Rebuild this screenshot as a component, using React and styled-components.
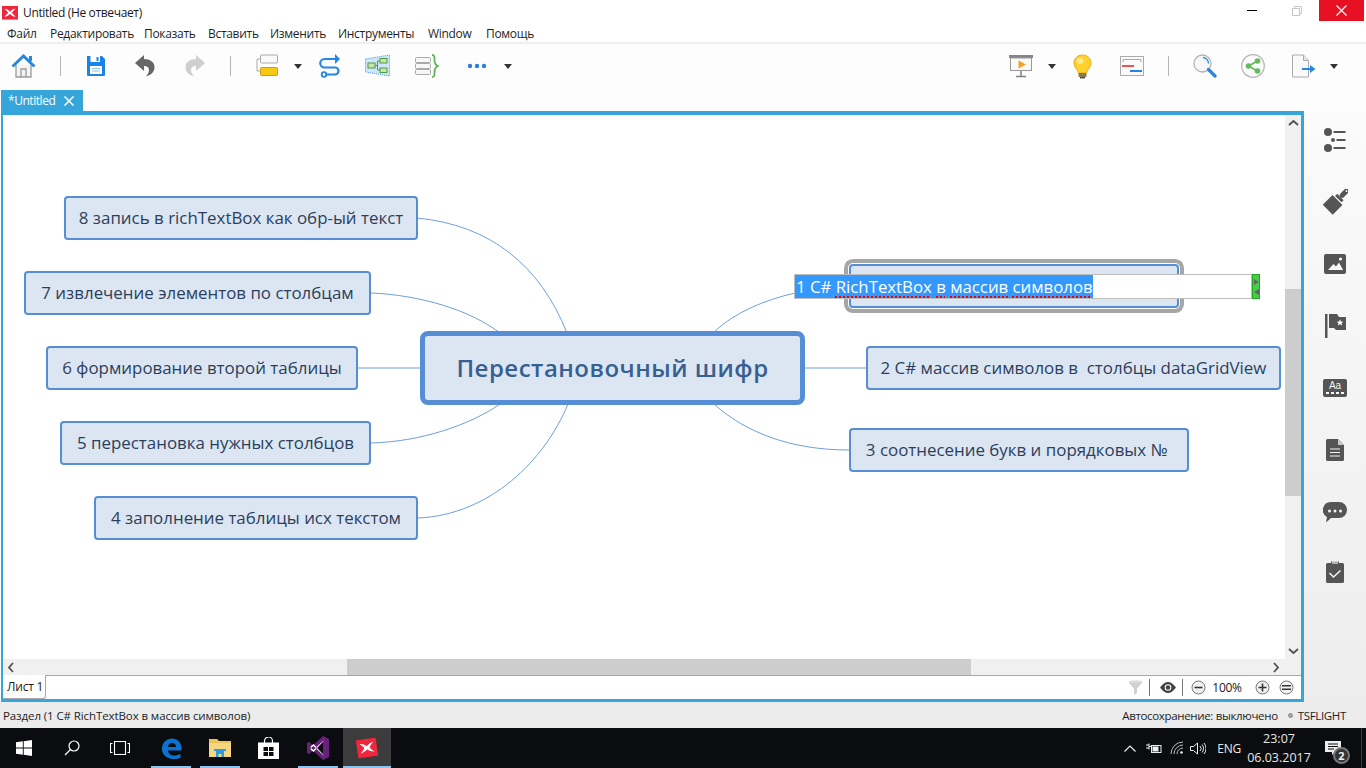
import React from "react";
import styled, { createGlobalStyle } from "styled-components";

const UI_FONT = `"Open Sans", "Noto Sans", "Liberation Sans", sans-serif`;

const Global = createGlobalStyle`
  html, body { margin: 0; padding: 0; background: #fff; overflow: hidden; }
  * { box-sizing: border-box; }
`;

const Page = styled.div`
  width: 1366px;
  height: 768px;
  display: flex;
  flex-direction: column;
  overflow: hidden;
  font-family: ${UI_FONT};
  font-size: 12px;
  color: #222;
  background: #fdfdfd;
`;

const TitleBar = styled.div`
  height: 25px;
  display: flex;
  align-items: flex-start;
  background: #fff;
`;
const TitleLogo = styled.div`
  margin: 6px 0 0 2px;
  width: 16px;
  height: 14px;
  display: flex;
`;
const TitleText = styled.div`
  margin: 4px 0 0 5px;
  line-height: 17px;
  letter-spacing: -0.35px;
  color: #1a1a1a;
`;
const WinControls = styled.div`
  margin-left: auto;
  margin-right: 2px;
  display: flex;
`;
const WinButton = styled.div`
  width: ${(p) => p.$w}px;
  height: 21px;
  display: flex;
  align-items: center;
  justify-content: center;
  background: ${(p) => (p.$close ? "#e81123" : "transparent")};
`;

const MenuBar = styled.div`
  height: 17px;
  display: flex;
  padding: 1px 0 0 7px;
  background: #fff;
`;
const MenuItem = styled.div`
  width: ${(p) => p.$w}px;
  line-height: 16px;
  letter-spacing: -0.3px;
  white-space: nowrap;
  color: #1f1f1f;
`;

const Toolbar = styled.div`
  height: 48px;
  display: flex;
  align-items: center;
  padding: 0 28px 2px 0;
  border-top: 2px solid #efefef;
  background: #fdfdfd;
`;
const ToolGroup = styled.div`
  display: flex;
  align-items: center;
  margin-left: ${(p) => (p.$right ? "auto" : "0")};
`;
const Tool = styled.div`
  width: ${(p) => p.$w}px;
  height: 26px;
  margin-left: ${(p) => p.$ml}px;
  display: flex;
  align-items: center;
  justify-content: center;
`;
const ToolSep = styled.div`
  width: 1px;
  height: 20px;
  margin-left: ${(p) => p.$ml}px;
  background: #b5b5b5;
`;
const Caret = styled.div`
  width: 0;
  height: 0;
  margin-left: ${(p) => p.$ml}px;
  border-left: 4.5px solid transparent;
  border-right: 4.5px solid transparent;
  border-top: 5px solid #333;
`;

const TabRow = styled.div`
  height: 21px;
  display: flex;
  padding-left: 1px;
  background: #fdfdfd;
`;
const Tab = styled.div`
  width: 82px;
  height: 21px;
  display: flex;
  align-items: center;
  justify-content: space-between;
  padding: 0 9px 0 7px;
  background: #36a5d9;
  color: #fff;
  letter-spacing: -0.45px;
`;

const Workspace = styled.div`
  height: 591px;
  display: flex;
`;
const Frame = styled.div`
  width: 1303px;
  margin-left: 1px;
  display: flex;
  flex-direction: column;
  border: 3px solid #36a5d9;
  border-top-width: 4px;
  border-left-width: 2px;
  background: #fff;
`;
const CanvasRow = styled.div`
  height: 544px;
  display: flex;
`;
const Canvas = styled.div`
  position: relative;
  width: 1282px;
  height: 544px;
  overflow: hidden;
  background: #fff;
`;
const Lines = styled.svg`
  position: absolute;
  left: 0;
  top: 0;
`;
const Node = styled.div`
  position: absolute;
  left: ${(p) => p.$x - 3}px;
  top: ${(p) => p.$y - 115}px;
  width: ${(p) => p.$w}px;
  height: ${(p) => p.$h}px;
  display: flex;
  align-items: center;
  justify-content: center;
  padding-bottom: 2px;
  white-space: pre;
  background: #dce6f2;
  border: 2px solid #558ed5;
  border-radius: 4px;
  font-size: 16.9px;
  color: #2b3f5c;
  box-shadow: ${(p) => (p.$selected ? "0 0 0 1px #fff, 0 0 0 5px #a6a6a6" : "none")};
`;
const CentralNode = styled(Node)`
  border-width: 5px;
  border-radius: 8px;
  font-size: 24px;
  font-weight: 600;
  letter-spacing: 0.5px;
  color: #376092;
`;
const Editor = styled.div`
  position: absolute;
  left: ${794 - 3}px;
  top: ${274 - 115}px;
  width: 458px;
  height: 25px;
  border: 1px solid #bdbdbd;
  background: #fff;
  font-size: 16.8px;
  line-height: 23px;
  white-space: nowrap;
`;
const Selection = styled.span`
  display: inline-block;
  height: 23px;
  padding: 0 0 0 1px;
  background: #3399ff;
  color: #fff;
`;
const Misspelled = styled.span`
  text-decoration: underline dotted #f00000 2px;
  text-underline-offset: 3px;
`;
const Handle = styled.div`
  position: absolute;
  left: ${1252 - 3}px;
  top: ${274 - 115}px;
  width: 8px;
  height: 25px;
  display: flex;
  flex-direction: column;
  align-items: center;
  justify-content: center;
  gap: 4px;
  background: #44d044;
  border: 1px solid #1fa51f;
`;

const VScroll = styled.div`
  width: 16px;
  height: 544px;
  display: flex;
  flex-direction: column;
  background: #f0f0f0;
`;
const ScrollBtn = styled.div`
  flex: none;
  width: 16px;
  height: 16px;
  margin-left: ${(p) => p.$ml || 0}px;
  display: flex;
  align-items: center;
  justify-content: center;
`;
const VThumbSpace = styled.div`
  flex: none;
  height: ${(p) => p.$h}px;
`;
const VThumb = styled.div`
  flex: none;
  height: 207px;
  background: #cdcdcd;
`;
const HScroll = styled.div`
  height: 16px;
  display: flex;
  background: #f0f0f0;
`;
const HThumb = styled.div`
  width: 624px;
  margin-left: 328px;
  background: #cdcdcd;
`;
const SheetBar = styled.div`
  flex: 1;
  display: flex;
  align-items: stretch;
  background: #fff;
`;
const SheetTab = styled.div`
  width: 43px;
  padding-left: 4px;
  line-height: 23px;
  letter-spacing: -0.2px;
  color: #1a1a1a;
  border-right: 1px solid #a8a8a8;
  border-bottom: 1px solid #a8a8a8;
  border-bottom-right-radius: 3px;
`;
const SheetRest = styled.div`
  flex: 1;
  display: flex;
  align-items: center;
  justify-content: flex-end;
  padding-right: 7px;
  border-top: 1px solid #a8a8a8;
`;
const SheetTool = styled.div`
  width: ${(p) => p.$w}px;
  margin-left: ${(p) => p.$ml}px;
  display: flex;
  align-items: center;
  justify-content: center;
  font-size: 12px;
  letter-spacing: -0.3px;
  color: #222;
`;
const SheetSep = styled.div`
  width: 1px;
  height: 17px;
  margin-left: ${(p) => p.$ml}px;
  background: #777;
`;

const Sidebar = styled.div`
  flex: 1;
  display: flex;
  flex-direction: column;
  align-items: center;
  gap: 38px;
  padding-top: 17px;
  background: linear-gradient(#fbfbfb, #ededed);
`;
const SideIcon = styled.div`
  width: 26px;
  height: 24px;
  margin-top: ${(p) => p.$mt || 0}px;
  display: flex;
  align-items: center;
  justify-content: center;
`;

const StatusBar = styled.div`
  height: 26px;
  display: flex;
  align-items: center;
  padding: 0 20px 0 3px;
  background: #ececec;
  font-size: 11.5px;
  letter-spacing: -0.1px;
  color: #1e1e1e;
`;
const StatusRight = styled.div`
  margin-left: auto;
  display: flex;
  align-items: center;
  letter-spacing: -0.34px;
`;
const StatusDot = styled.span`
  width: 5px;
  height: 5px;
  margin: 0 5px 0 10px;
  border-radius: 50%;
  background: #aaa;
  border: 1px solid #8a8a8a;
`;

const Taskbar = styled.div`
  height: 40px;
  display: flex;
  background: #0a0c0f;
  color: #e8e8e8;
`;
const TaskItem = styled.div`
  position: relative;
  width: 48px;
  height: 40px;
  margin-left: ${(p) => p.$ml || 0}px;
  flex: none;
  display: flex;
  align-items: center;
  justify-content: center;
  background: ${(p) => (p.$active ? "#3c3c3c" : "transparent")};
  &::after {
    content: "";
    display: ${(p) => (p.$open ? "block" : "none")};
    position: absolute;
    left: ${(p) => (p.$active ? 0 : 4)}px;
    right: ${(p) => (p.$active ? 0 : 4)}px;
    bottom: 0;
    height: 2px;
    background: #8cc4f0;
  }
`;
const Tray = styled.div`
  margin-left: auto;
  display: flex;
  align-items: center;
  height: 40px;
`;
const TrayIcon = styled.div`
  margin-left: ${(p) => p.$ml}px;
  display: flex;
`;
const TrayText = styled.div`
  margin-left: 11px;
  font-size: 12px;
  letter-spacing: -0.2px;
`;
const Clock = styled.div`
  width: 64px;
  margin-left: 6px;
  text-align: center;
  font-size: 12.5px;
  line-height: 19px;
`;
const Notify = styled.div`
  position: relative;
  width: 53px;
  height: 40px;
  margin-left: -2px;
  margin-right: 4px;
  padding-right: 5px;
  display: flex;
  align-items: center;
  justify-content: center;
  border-right: 1px solid #3a3a3a;
`;
const Badge = styled.div`
  position: absolute;
  left: 24px;
  top: 19px;
  width: 17px;
  height: 17px;
  border-radius: 50%;
  background: #333;
  border: 2px solid #777;
  color: #eee;
  font-size: 11px;
  font-weight: 700;
  line-height: 13px;
  text-align: center;
`;

const XmindMark = ({ size = 16 }) => (
  <svg width={size} height={size * 0.85} viewBox="0 0 20 17">
    <rect width="20" height="17" fill="#f0263c" />
    <path d="M3 3.500c3 .2 5 1.500 7 3.600 2-2.100 4-3.400 7-3.600-2 1.600-3.600 3.200-4.700 5 1.100 1.600 2.700 3 4.700 4.900-3-.3-5-1.500-7-3.500-2 2-4 3.200-7 3.500 2-1.900 3.600-3.300 4.700-4.900C6.600 6.700 5 5.100 3 3.500z" fill="#fff" />
  </svg>
);

const HomeIcon = () => (
  <svg width="25" height="24" viewBox="0 0 25 24">
    <path d="M5 11v12h15V11" fill="#f4f4f4" stroke="#9a9a9a" strokeWidth="1.300" />
    <path d="M10 23v-8h5v8" fill="none" stroke="#9a9a9a" strokeWidth="1.300" />
    <path d="M1.500 12.500 12.500 2l11 10.500" fill="none" stroke="#2a86e0" strokeWidth="3" />
    <rect x="18" y="2" width="3" height="5" fill="#2a86e0" />
  </svg>
);
const SaveIcon = () => (
  <svg width="20" height="22" viewBox="0 0 20 22">
    <path d="M1 1h15l3 3v16a1 1 0 0 1-1 1H2a1 1 0 0 1-1-1z" fill="#1a83e6" />
    <rect x="4.500" y="1" width="9.500" height="6" fill="#fff" />
    <rect x="10.500" y="2" width="2" height="4" fill="#1a83e6" />
    <rect x="4" y="11" width="12" height="8" fill="#fff" />
    <path d="M6 13.500h8M6 16h8" stroke="#8dbdf0" strokeWidth="1" />
  </svg>
);
const UndoIcon = ({ color, flip }) => (
  <svg width="20" height="22" viewBox="0 0 20 22" style={flip ? { transform: "scaleX(-1)" } : undefined}>
    <path d="M9 0 0 8l9 8v-5c3 0 5 1.500 5 4 0 2-1 4-3 6.500 5.500-1.500 8.500-5 8.500-9.500 0-5-4.500-8-10.500-8z" fill={color} />
  </svg>
);
const TopicIcon = () => (
  <svg width="22" height="24" viewBox="0 0 22 24">
    <rect x="4.500" y="1" width="17" height="8" rx="1" fill="#fafafa" stroke="#aaa" />
    <rect x="4.500" y="13.500" width="17" height="8" rx="1" fill="#f7c815" stroke="#dd9a00" />
    <path d="M4.500 5H1v12h3.500" fill="none" stroke="#aaa" />
  </svg>
);
const RelationIcon = () => (
  <svg width="23" height="24" viewBox="0 0 23 24">
    <path d="M18 5H6.500a4 4 0 0 0 0 8.500H17a3.500 3.500 0 0 1 0 7H8" fill="none" stroke="#2486e4" strokeWidth="2.200" />
    <path d="M17 0v10l5-5z" fill="#2486e4" />
    <circle cx="6" cy="20.500" r="2.300" fill="#fff" stroke="#2486e4" strokeWidth="1.800" />
  </svg>
);
const BoundaryIcon = () => (
  <svg width="25" height="24" viewBox="0 0 25 24">
    <path d="M0.500 5 24.500 1v21L0.500 18z" fill="#cfe5fa" stroke="#4c9ae0" strokeDasharray="1 1" />
    <g fill="#c9e6a5" stroke="#4f9a48">
      <rect x="3" y="9" width="7" height="5" />
      <rect x="15" y="4.500" width="7" height="4.500" />
      <rect x="15" y="14" width="7" height="4.500" />
    </g>
    <path d="M10 11.500h2.500M12.500 7v9M12.500 7H15M12.500 16H15" stroke="#4f9a48" fill="none" />
  </svg>
);
const SummaryIcon = () => (
  <svg width="24" height="24" viewBox="0 0 24 24">
    <g fill="#f7f7f7" stroke="#a9a9a9">
      <rect x="0.500" y="3.500" width="15" height="5" rx="1" />
      <rect x="0.500" y="9.500" width="15" height="5" rx="1" />
      <rect x="0.500" y="15.500" width="15" height="5" rx="1" />
    </g>
    <path d="M17 1c3 0 2.500 2.500 2.500 5 0 3 .5 5 3.500 6-3 1-3.500 3-3.500 6 0 2.500.5 5-2.500 5" fill="none" stroke="#5cb356" strokeWidth="1.800" />
  </svg>
);
const DotsIcon = () => (
  <svg width="20" height="6" viewBox="0 0 20 6">
    <circle cx="3" cy="3" r="2.200" fill="#2a7fd8" />
    <circle cx="10" cy="3" r="2.200" fill="#2a7fd8" />
    <circle cx="17" cy="3" r="2.200" fill="#2a7fd8" />
  </svg>
);
const PresentIcon = () => (
  <svg width="24" height="24" viewBox="0 0 24 24">
    <rect x="0" y="1" width="24" height="3" fill="#858585" />
    <rect x="1.500" y="4" width="21" height="12.500" fill="#fafafa" stroke="#9a9a9a" />
    <path d="M9.500 6.500v8l7.500-4z" fill="#f5a020" />
    <path d="M12 17v5M7 22.500h10" stroke="#808080" strokeWidth="1.500" />
  </svg>
);
const BulbIcon = () => (
  <svg width="19" height="25" viewBox="0 0 19 25">
    <path d="M9.500 1C4.500 1 1 4.500 1 9c0 4 3.500 6 4.500 10h8C14.500 15 18 13 18 9c0-4.500-3.500-8-8.500-8z" fill="#ffd12e" stroke="#e9ab14" />
    <ellipse cx="7" cy="7" rx="3.500" ry="3" fill="#ffe98a" />
    <rect x="5.500" y="19" width="8" height="4" fill="#8a7a50" />
    <rect x="7" y="23" width="5" height="1.500" fill="#555" />
  </svg>
);
const GanttIcon = () => (
  <svg width="24" height="20" viewBox="0 0 24 20">
    <rect x="0.500" y="0.500" width="23" height="19" fill="#fafafa" stroke="#aaa" />
    <path d="M3 6V3.500h18V6" fill="none" stroke="#aaa" />
    <rect x="2" y="9" width="12" height="2" fill="#ef5350" />
    <rect x="10" y="14" width="12" height="2" fill="#2486e4" />
  </svg>
);
const SearchIcon = () => (
  <svg width="24" height="24" viewBox="0 0 24 24">
    <circle cx="9.500" cy="9.500" r="8.500" fill="#f7f7f7" stroke="#b5b5b5" strokeWidth="1.300" />
    <path d="M10 3.500a6 6 0 0 1 5.500 6" fill="none" stroke="#2a86e0" strokeWidth="1.300" />
    <path d="M15.500 15.500 22 22" stroke="#2a86e0" strokeWidth="3.200" strokeLinecap="round" />
  </svg>
);
const ShareIcon = () => (
  <svg width="24" height="24" viewBox="0 0 24 24">
    <circle cx="12" cy="12" r="11.300" fill="#fafafa" stroke="#b5b5b5" strokeWidth="1.200" />
    <path d="M16.500 7 7.500 12l9 5" fill="none" stroke="#64ba5e" strokeWidth="1.600" />
    <circle cx="16.500" cy="7" r="2.800" fill="#64ba5e" />
    <circle cx="7.500" cy="12" r="2.800" fill="#64ba5e" />
    <circle cx="16.500" cy="17" r="2.800" fill="#64ba5e" />
  </svg>
);
const ExportIcon = () => (
  <svg width="24" height="24" viewBox="0 0 24 24">
    <path d="M0.500 1h11l5 5.500v16.500H0.500z" fill="#fafafa" stroke="#aaa" />
    <path d="M11.500 1v5.500h5" fill="#e6e6e6" stroke="#aaa" />
    <path d="M10 15h9" stroke="#2486e4" strokeWidth="2" />
    <path d="M18 11l5.500 4-5.500 4z" fill="#2486e4" />
  </svg>
);

const ListSide = () => (
  <svg width="22" height="24" viewBox="0 0 22 24" fill="#555">
    <circle cx="4" cy="4" r="4" />
    <circle cx="4" cy="20" r="4" />
    <circle cx="9" cy="12" r="2" />
    <rect x="9.500" y="3" width="12" height="2" />
    <rect x="12.500" y="11" width="9" height="2" />
    <rect x="9.500" y="19" width="12" height="2" />
  </svg>
);
const BrushSide = () => (
  <svg width="25" height="26" viewBox="0 0 25 26" fill="#555">
    <g transform="rotate(45 12.500 13)">
      <rect x="10" y="-5" width="5" height="11" rx="2.500" />
      <circle cx="12.500" cy="-2.500" r="0.900" fill="#fafafa" />
      <path d="M8 6h9v3H8z" />
      <path d="M5.500 10.200h14V24H5.500z" />
    </g>
  </svg>
);
const ImageSide = () => (
  <svg width="22" height="20" viewBox="0 0 22 20">
    <rect width="22" height="20" rx="2" fill="#555" />
    <path d="M4 16l5.500-6 2.500 2.500 3-4 4 7.500z" fill="#fafafa" />
    <circle cx="16.500" cy="5" r="1.600" fill="#fafafa" />
  </svg>
);
const FlagSide = () => (
  <svg width="21" height="24" viewBox="0 0 21 24" fill="#555">
    <rect x="0" y="0" width="2.500" height="24" />
    <path d="M4 0h8l2 3h7v13H11l-2-2H4z" />
    <path d="M15 5.500l1 2 2.200.2-1.600 1.500.5 2.300-2.100-1.200-2.100 1.200.5-2.300-1.600-1.500 2.200-.2z" fill="#fafafa" />
  </svg>
);
const TextSide = styled.div`
  width: 24px;
  height: 18px;
  display: flex;
  flex-direction: column;
  align-items: center;
  border-radius: 2px;
  background: #555;
  color: #f5f5f5;
  font-family: "Liberation Sans", sans-serif;
  font-size: 10px;
  line-height: 11px;
  padding-top: 1px;
  &::after {
    content: "";
    width: 18px;
    height: 1.500px;
    margin-top: 1px;
    background: repeating-linear-gradient(90deg, #f5f5f5 0 3px, transparent 3px 5px);
  }
`;
const DocSide = () => (
  <svg width="18" height="22" viewBox="0 0 18 22">
    <path d="M1.500 0H12l6 6v14.500a1.500 1.500 0 0 1-1.500 1.500h-15A1.500 1.500 0 0 1 0 20.500v-19A1.500 1.500 0 0 1 1.500 0z" fill="#555" />
    <path d="M12 0l6 6h-6z" fill="#c9c9c9" />
    <path d="M4 10h10M4 13.500h10M4 17h10" stroke="#f5f5f5" strokeWidth="1.200" />
  </svg>
);
const CommentSide = () => (
  <svg width="24" height="21" viewBox="0 0 24 21">
    <path d="M8 0h8a8 8 0 0 1 0 16H8l-5 4.500 1-5.500A8 8 0 0 1 8 0z" fill="#555" />
    <circle cx="6.500" cy="9" r="1.500" fill="#f5f5f5" />
    <circle cx="12" cy="9" r="1.500" fill="#f5f5f5" />
    <circle cx="17.500" cy="9" r="1.500" fill="#f5f5f5" />
  </svg>
);
const ClipSide = () => (
  <svg width="18" height="23" viewBox="0 0 18 23">
    <path d="M1.500 3H5V1.500h8V3h3.500A1.500 1.500 0 0 1 18 4.500v17a1.500 1.500 0 0 1-1.500 1.500h-15A1.500 1.500 0 0 1 0 21.500v-17A1.500 1.500 0 0 1 1.500 3z" fill="#555" />
    <path d="M6 1h6v3H6z" fill="#f0f0f0" opacity=".6" />
    <path d="M3.500 13l4 4 7-6.500" fill="none" stroke="#f5f5f5" strokeWidth="1.500" />
  </svg>
);

const Chevron = ({ dir }) => {
  const d = {
    up: "M1 7 5.500 3 10 7",
    down: "M1 3 5.500 7 10 3",
    left: "M7 1 3 5.500 7 10",
    right: "M3 1 7 5.500 3 10",
  }[dir];
  return (
    <svg width="11" height="11" viewBox="0 0 11 11">
      <path d={d} fill="none" stroke="#505050" strokeWidth="1.800" />
    </svg>
  );
};

const FilterIcon = () => (
  <svg width="15" height="15" viewBox="0 0 15 15">
    <ellipse cx="7.500" cy="2" rx="7" ry="1.800" fill="#dcdcdc" />
    <path d="M1 3 6 8.500V15l3-2V8.500L14 3z" fill="#d0d0d0" />
  </svg>
);
const EyeIcon = () => (
  <svg width="16" height="11" viewBox="0 0 16 11">
    <path d="M0 5.500C3 1.500 5.500 0 8 0s5 1.500 8 5.500C13 9.500 10.500 11 8 11S3 9.500 0 5.500z" fill="#444" />
    <circle cx="8" cy="5.500" r="3.300" fill="#fff" />
    <circle cx="8" cy="5.500" r="2.200" fill="#444" />
  </svg>
);
const ZoomBtn = ({ type }) => (
  <svg width="15" height="15" viewBox="0 0 15 15">
    <circle cx="7.500" cy="7.500" r="6.500" fill="#f2f2f2" stroke="#777" />
    {type === "fit" ? (
      <path d="M3 5.800h9M3 9.200h9" stroke="#333" strokeWidth="1.600" />
    ) : (
      <path d={type === "plus" ? "M3.500 7.500h8M7.500 3.500v8" : "M3.500 7.500h8"} stroke="#333" strokeWidth="1.600" />
    )}
  </svg>
);

const WinLogo = () => (
  <svg width="16" height="16" viewBox="0 0 16 16" fill="#fff">
    <path d="M0 2.300 6.800 1.300v6.300H0zM7.700 1.200 16 0v7.600H7.700zM0 8.400h6.800v6.300L0 13.700zM7.700 8.400H16V16l-8.300-1.200z" />
  </svg>
);
const SearchTask = () => (
  <svg width="16" height="16" viewBox="0 0 16 16" fill="none" stroke="#fff" strokeWidth="1.200">
    <circle cx="10" cy="6" r="5" />
    <path d="M6.500 9.500 1 15" />
  </svg>
);
const TaskView = () => (
  <svg width="20" height="14" viewBox="0 0 20 14" fill="none" stroke="#fff" strokeWidth="1.100">
    <rect x="4.500" y="0.500" width="11" height="13" />
    <path d="M2.500 2.500H.5v9h2M17.500 2.500h2v9h-2" />
  </svg>
);
const EdgeIcon = () => (
  <svg width="21" height="21" viewBox="0 0 21 21">
    <path d="M1 11C1 4 6 .5 11 .5c5.500 0 9.500 4 9.500 10v2H7c.3 3.500 3 5 6 5 2.500 0 5-.8 6.500-1.800v4c-2 1-4.500 1.500-7 1.500C6 20.700 1 17 1 11zm6-2h8c0-2.500-1.500-4-3.800-4C8.800 5 7.300 6.500 7 9z" fill="#0b72cf" />
  </svg>
);
const FolderIcon = () => (
  <svg width="22" height="20" viewBox="0 0 22 20">
    <path d="M0 1h8l2 2h12v16H0z" fill="#eec25a" />
    <path d="M0 5h22v14H0z" fill="#f6d77f" />
    <path d="M7 19v-6h8v6h-2.500v-3h-3v3z" fill="#2f9bdc" />
    <rect x="5" y="11" width="12" height="2" fill="#2f9bdc" />
  </svg>
);
const StoreIcon = () => (
  <svg width="21" height="22" viewBox="0 0 21 22">
    <path d="M6.500 6V4a4 4 0 0 1 8 0v2" fill="none" stroke="#fff" strokeWidth="1.200" />
    <path d="M0 5.500h21V22H0z" fill="#fff" />
    <path d="M5.500 10h4.500v4H5.500zM11 10h4.500v4H11zM5.500 15h4.500v4H5.500zM11 15h4.500v4H11z" fill="#0a0c0f" />
  </svg>
);
const VsIcon = () => (
  <svg width="22" height="24" viewBox="0 0 22 24">
    <path d="M16 0l6 3v18l-6 3L6 14.500 2 18l-2-1V7l2-1 4 3.500z" fill="#68217a" />
    <path d="M16 6.500 10 12l6 5.500zM3 9v6l3-3z" fill="#0a0c0f" />
    <path d="M16.500 4.500 6.500 14 3 11v2l3.500 3 10-11zM16.500 19.500 6.500 10 3 13v-2l3.500-3 10 11z" fill="#fff" />
  </svg>
);
const TaskXmind = () => (
  <svg width="22" height="20" viewBox="0 0 22 20" style={{ transform: "rotate(-8deg)" }}>
    <rect x="1" y="1" width="20" height="18" rx="1" fill="#f0263c" />
    <path d="M4 5c3 .2 5 1.300 7 3.200C13 6.300 15 5.200 18 5c-2 1.500-3.300 3-4.300 4.800 1 1.500 2.300 3 4.300 4.700-3-.3-5-1.300-7-3.200-2 1.900-4 2.900-7 3.200 2-1.700 3.300-3.200 4.300-4.700C7.300 8 6 6.500 4 5z" fill="#fff" />
  </svg>
);

const menu = [
  ["Файл", 43],
  ["Редактировать", 94],
  ["Показать", 64],
  ["Вставить", 62],
  ["Изменить", 68],
  ["Инструменты", 90],
  ["Window", 58],
  ["Помощь", 60],
];

const branches = [
  ["8 запись в richTextBox как обр-ый текст", 64, 196, 354, 44],
  ["7 извлечение элементов по столбцам", 24, 271, 347, 44],
  ["6 формирование второй таблицы", 46, 346, 312, 44],
  ["5 перестановка нужных столбцов", 60, 421, 311, 44],
  ["4 заполнение таблицы исх текстом", 94, 496, 324, 44],
  ["2 C# массив символов в  столбцы dataGridView", 866, 346, 415, 44],
  ["3 соотнесение букв и порядковых № ", 849, 428, 340, 44],
];

const connectors = [
  "M417 218C490 225 540 265 567 333",
  "M371 293C420 295 470 310 500 333",
  "M357 368H420",
  "M370 443C420 442 470 425 500 404",
  "M418 518C490 515 545 460 568 404",
  "M714 332C735 312 765 300 795 293",
  "M805 368H866",
  "M714 404C745 432 790 450 849 450",
];

export default function App() {
  return (
    <Page>
      <Global />
      <TitleBar>
        <TitleLogo>
          <XmindMark />
        </TitleLogo>
        <TitleText>Untitled (Не отвечает)</TitleText>
        <WinControls>
          <WinButton $w={45}>
            <svg width="10" height="1"><rect width="10" height="1" fill="#000" /></svg>
          </WinButton>
          <WinButton $w={45}>
            <svg width="10" height="10" viewBox="0 0 10 10" fill="none" stroke="#c8c8c8">
              <rect x=".5" y="2.500" width="7" height="7" />
              <path d="M2.500 2.500v-2h7v7h-2" />
            </svg>
          </WinButton>
          <WinButton $w={45} $close>
            <svg width="11" height="11" viewBox="0 0 11 11" stroke="#fff" strokeWidth="1.200">
              <path d="M.5.500l10 10M10.500.500l-10 10" />
            </svg>
          </WinButton>
        </WinControls>
      </TitleBar>

      <MenuBar>
        {menu.map(([label, w]) => (
          <MenuItem key={label} $w={w}>{label}</MenuItem>
        ))}
      </MenuBar>

      <Toolbar>
        <ToolGroup>
          <Tool $w={25} $ml={11}><HomeIcon /></Tool>
          <ToolSep $ml={24} />
          <Tool $w={20} $ml={25}><SaveIcon /></Tool>
          <Tool $w={20} $ml={29}><UndoIcon color="#666" /></Tool>
          <Tool $w={20} $ml={30}><UndoIcon color="#cfcfcf" flip /></Tool>
          <ToolSep $ml={25} />
          <Tool $w={22} $ml={25}><TopicIcon /></Tool>
          <Caret $ml={16} />
          <Tool $w={23} $ml={16}><RelationIcon /></Tool>
          <Tool $w={25} $ml={24}><BoundaryIcon /></Tool>
          <Tool $w={24} $ml={25}><SummaryIcon /></Tool>
          <Tool $w={20} $ml={28}><DotsIcon /></Tool>
          <Caret $ml={17} />
        </ToolGroup>
        <ToolGroup $right>
          <Tool $w={24} $ml={0}><PresentIcon /></Tool>
          <Caret $ml={15} />
          <Tool $w={19} $ml={17}><BulbIcon /></Tool>
          <Tool $w={24} $ml={28}><GanttIcon /></Tool>
          <ToolSep $ml={24} />
          <Tool $w={24} $ml={24}><SearchIcon /></Tool>
          <Tool $w={24} $ml={24}><ShareIcon /></Tool>
          <Tool $w={24} $ml={27}><ExportIcon /></Tool>
          <Caret $ml={14} />
        </ToolGroup>
      </Toolbar>

      <TabRow>
        <Tab>
          *Untitled
          <svg width="10" height="10" viewBox="0 0 10 10" stroke="#fff" strokeWidth="1.500">
            <path d="M.5.500l9 9M9.500.500l-9 9" />
          </svg>
        </Tab>
      </TabRow>

      <Workspace>
        <Frame>
          <CanvasRow>
            <Canvas>
              <Lines width="1282" height="544" viewBox="3 115 1282 544">
                {connectors.map((d) => (
                  <path key={d} d={d} fill="none" stroke="#6f9fdc" strokeWidth="1" />
                ))}
              </Lines>
              <CentralNode $x={420} $y={331} $w={385} $h={74}>Перестановочный шифр</CentralNode>
              {branches.map(([label, x, y, w, h]) => (
                <Node key={label} $x={x} $y={y} $w={w} $h={h}>{label}</Node>
              ))}
              <Node $x={849} $y={264} $w={330} $h={44} $selected />
              <Editor>
                <Selection>
                  1 C# <Misspelled>RichTextBox</Misspelled> <Misspelled>в</Misspelled>{" "}
                  <Misspelled>массив</Misspelled> <Misspelled>символов</Misspelled>
                </Selection>
              </Editor>
              <Handle>
                <svg width="5" height="6" viewBox="0 0 5 6"><path d="M0 0l5 3-5 3z" fill="#666" /></svg>
                <svg width="5" height="6" viewBox="0 0 5 6"><path d="M5 0 0 3l5 3z" fill="#666" /></svg>
              </Handle>
            </Canvas>
            <VScroll>
              <ScrollBtn><Chevron dir="up" /></ScrollBtn>
              <VThumbSpace $h={158} />
              <VThumb />
              <VThumbSpace $h={147} />
              <ScrollBtn><Chevron dir="down" /></ScrollBtn>
            </VScroll>
          </CanvasRow>
          <HScroll>
            <ScrollBtn><Chevron dir="left" /></ScrollBtn>
            <HThumb />
            <ScrollBtn $ml={297}><Chevron dir="right" /></ScrollBtn>
          </HScroll>
          <SheetBar>
            <SheetTab>Лист 1</SheetTab>
            <SheetRest>
              <SheetTool $w={15} $ml={0}><FilterIcon /></SheetTool>
              <SheetSep $ml={6} />
              <SheetTool $w={16} $ml={10}><EyeIcon /></SheetTool>
              <SheetSep $ml={6} />
              <SheetTool $w={15} $ml={8}><ZoomBtn type="minus" /></SheetTool>
              <SheetTool $w={34} $ml={4}>100%</SheetTool>
              <SheetTool $w={15} $ml={11}><ZoomBtn type="plus" /></SheetTool>
              <SheetTool $w={15} $ml={9}><ZoomBtn type="fit" /></SheetTool>
            </SheetRest>
          </SheetBar>
        </Frame>
        <Sidebar>
          <SideIcon><ListSide /></SideIcon>
          <SideIcon><BrushSide /></SideIcon>
          <SideIcon><ImageSide /></SideIcon>
          <SideIcon><FlagSide /></SideIcon>
          <SideIcon><TextSide>Aa</TextSide></SideIcon>
          <SideIcon><DocSide /></SideIcon>
          <SideIcon><CommentSide /></SideIcon>
          <SideIcon $mt={-3}><ClipSide /></SideIcon>
        </Sidebar>
      </Workspace>

      <StatusBar>
        Раздел (1 C# RichTextBox в массив символов)
        <StatusRight>
          Автосохранение: выключено
          <StatusDot />
          TSFLIGHT
        </StatusRight>
      </StatusBar>

      <Taskbar>
        <TaskItem><WinLogo /></TaskItem>
        <TaskItem><SearchTask /></TaskItem>
        <TaskItem><TaskView /></TaskItem>
        <TaskItem $open $ml={3}><EdgeIcon /></TaskItem>
        <TaskItem $open $ml={1}><FolderIcon /></TaskItem>
        <TaskItem><StoreIcon /></TaskItem>
        <TaskItem $open $ml={2}><VsIcon /></TaskItem>
        <TaskItem $open $active $ml={1}><TaskXmind /></TaskItem>
        <Tray>
          <TrayIcon $ml={0}>
            <svg width="12" height="7" viewBox="0 0 12 7" fill="none" stroke="#eee" strokeWidth="1.200"><path d="M.5 6.500 6 1l5.500 5.500" /></svg>
          </TrayIcon>
          <TrayIcon $ml={10}>
            <svg width="16" height="11" viewBox="0 0 16 11" fill="none" stroke="#eee">
              <path d="M0 2h3M0 5h3M3 .5v6M3 3.500h2" />
              <rect x="5.500" y="2.500" width="9.500" height="7" />
              <rect x="7" y="4" width="5" height="4" fill="#eee" />
            </svg>
          </TrayIcon>
          <TrayIcon $ml={8}>
            <svg width="14" height="14" viewBox="0 0 14 14" fill="none" stroke="#bbb">
              <path d="M1 13A12 12 0 0 1 13 1M4 13a9 9 0 0 1 9-9M7 13a6 6 0 0 1 6-6" />
              <circle cx="11.500" cy="11.500" r="1.300" fill="#eee" stroke="none" />
            </svg>
          </TrayIcon>
          <TrayIcon $ml={6}>
            <svg width="16" height="13" viewBox="0 0 16 13" fill="none" stroke="#eee">
              <path d="M.5 4.500h3L7.500 1v11l-4-3.500h-3z" />
              <path d="M10 4a3.500 3.500 0 0 1 0 5M12 2.500a6 6 0 0 1 0 8M14 1a8.500 8.500 0 0 1 0 11" />
            </svg>
          </TrayIcon>
          <TrayText>ENG</TrayText>
          <Clock>23:07<br />06.03.2017</Clock>
          <Notify>
            <svg width="16" height="14" viewBox="0 0 16 14">
              <path d="M0 0h16v11h-6l-3 3v-3H0z" fill="#eee" />
              <path d="M3 3h10M3 5.500h10M3 8h6" stroke="#111" />
            </svg>
            <Badge>2</Badge>
          </Notify>
        </Tray>
      </Taskbar>
    </Page>
  );
}
